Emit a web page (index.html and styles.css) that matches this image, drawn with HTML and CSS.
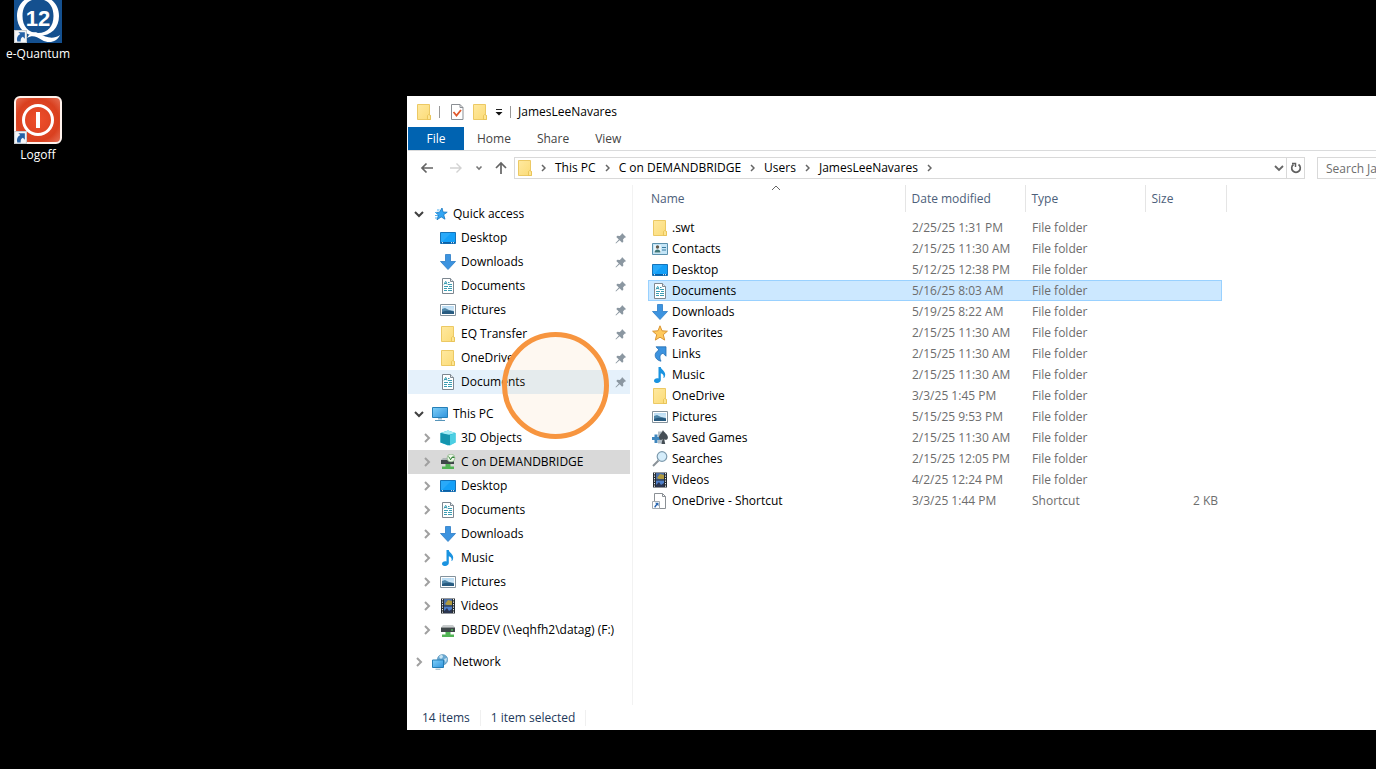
FILE: index.html
```html
<!DOCTYPE html>
<html lang="en">
<head>
<meta charset="utf-8">
<title>JamesLeeNavares</title>
<link rel="stylesheet" href="styles.css">
</head>
<body>
<svg class="sprite" aria-hidden="true">
  <defs>
    <linearGradient id="gFolder" x1="0" y1="0" x2="1" y2="1"><stop offset="0" stop-color="#ffe9a0"/><stop offset="1" stop-color="#fbdb76"/></linearGradient>
    <linearGradient id="gSky" x1="0" y1="0" x2="0" y2="1"><stop offset="0" stop-color="#b9dcf4"/><stop offset="1" stop-color="#e9f4fb"/></linearGradient>
    <linearGradient id="gScreen" x1="0" y1="0" x2="1" y2="1"><stop offset="0" stop-color="#7fd0f9"/><stop offset="1" stop-color="#2f93dc"/></linearGradient>
    <radialGradient id="gRed" cx=".5" cy=".5" r=".75"><stop offset="0" stop-color="#ee4f2c"/><stop offset=".6" stop-color="#d9401f"/><stop offset="1" stop-color="#e98068"/></radialGradient>
  </defs>
  <symbol id="folder" viewBox="0 0 16 16"><path d="M1.500.5h12v10.200l.9.600v4.200H1.500z" fill="url(#gFolder)" stroke="#ecc964"/><path d="M11.500 15.500v-4l1.200-1 1.800 1v4z" fill="#fde592" stroke="#e6bf50" stroke-width=".8"/></symbol>
  <symbol id="desktop" viewBox="0 0 16 16"><path d="M.5 2.500h15v11h-15z" fill="#14a0f8" stroke="#1574ba"/><path d="M1 12h14v1.500H1z" fill="#0b5fa5"/><path d="M2 12.700h1M11 12.700h1M13 12.700h1" stroke="#fff"/><path d="M1 3h10L2 12H1z" fill="#3db4fb" opacity=".5"/></symbol>
  <symbol id="downloads" viewBox="0 0 16 16"><path d="M5.500.5h5v7h5L8 15.500.5 7.500h5z" fill="#3c93df" stroke="#2b7cc6" stroke-width=".8"/></symbol>
  <symbol id="documents" viewBox="0 0 16 16"><path d="M2.500.5h8l3 3v12h-11z" fill="#fff" stroke="#7d8790"/><path d="M10.500.5v3h3" fill="#e4e8eb" stroke="#7d8790"/><path d="M4 6.500l1.500-3h.5L7 6.500M4.500 5.500h2M8 4.500h1.500M8 6.500h4M4 8.500h4M9 8.500h3M4 10.500h3M8 10.500h4M4 12.500h3M8 12.500h4" fill="none" stroke="#3c9db3"/></symbol>
  <symbol id="pictures" viewBox="0 0 16 16"><path d="M.5 2.500h15v11h-15z" fill="#fff" stroke="#84929c"/><path d="M2 4h12v8H2z" fill="url(#gSky)"/><path d="M2 7l3-1 4 2 5 1v3H2z" fill="#4f86a8"/><path d="M2 10c3-1 8-2 12 0v2H2z" fill="#285b80"/></symbol>
  <symbol id="music" viewBox="0 0 16 16"><path d="M6.500 0h2.300c.2 3 5.400 4 4.200 9-.3 1.500-1.200 2.200-1.600 2 .8-2.500-.3-4-2.600-4.800V13c0 3.500-6.800 4.200-6.800.8 0-2 2.300-3 4.500-2.300z" fill="#1a93e0"/></symbol>
  <symbol id="videos" viewBox="0 0 16 16"><path d="M1 .5h14v15H1z" fill="#252b31"/><path d="M4 1h8v6.500H4z" fill="#4c6fa5"/><path d="M4 8.500h8V15H4z" fill="#4f7fc9"/><path d="M5 6l3-4 4 1v4H7z" fill="#b09a3e"/><path d="M4 13l3-3 2 3 3-2v4H4z" fill="#2a3550"/><path d="M2.500 1v15M13.500 1v15" stroke="#e8ecef" stroke-dasharray="1.300 1.200"/></symbol>
  <symbol id="quick" viewBox="0 0 16 16"><path d="M10 2l1 4 4.200.2-3.500 2.500 1.300 4.500-3.800-2.300L5 13.800l1.500-4.800L3.500 6.500l4-.3z" fill="#32a5f3" stroke="#1676c0" stroke-width=".8"/><path d="M5 4h2.500M3 6.500h2M3 9.500h3M3 12h2" stroke="#4fb0f0"/></symbol>
  <symbol id="pc" viewBox="0 0 16 16"><path d="M.5 1.500h15v10H.5z" fill="url(#gScreen)" stroke="#257fb7"/><path d="M6 12h4v1.500H6z" fill="#9cbdd0"/><path d="M3 14.500h10" stroke="#5795ba"/></symbol>
  <symbol id="cube" viewBox="0 0 16 16"><path d="M.5 3L8 .5 15.500 3v9.500L8 15.500l-7.500-3z" fill="#19b3d0"/><path d="M.5 3L8 .5 15.500 3 8 5z" fill="#a5eef5"/><path d="M.5 3L10 5v10.500l-9.500-3z" fill="#1595ae"/><path d="M10 5l5.500-2v9.500l-5.500 3z" fill="#4ccfe3"/></symbol>
  <symbol id="drive" viewBox="0 0 16 16"><path d="M3 3h10l2 2.500H1z" fill="#c8cccd"/><path d="M1 5.500h14v4.500H1z" fill="#3f4749"/><path d="M11 8h2" stroke="#5aee67"/><path d="M5.500 10h5v2.500H14V15H2v-2.500h3.500z" fill="#52b455"/></symbol>
  <symbol id="drivex" viewBox="0 0 16 16"><path d="M1 6h13v4H1z" fill="#3f4749"/><path d="M3 4h8l1 2H1z" fill="#aeb5b6"/><circle cx="11" cy="4" r="3.900" fill="#edf7e9" stroke="#83ad7c" stroke-width=".7"/><path d="M8.500 2.500L11 6M13.500 2L10 6M11.500 3.500h3" stroke="#35853b" fill="none"/><path d="M5.500 10h5v2.500H14V15H2v-2.500h3.500z" fill="#52b455"/></symbol>
  <symbol id="network" viewBox="0 0 16 16"><circle cx="10.500" cy="5.700" r="5.200" fill="#6ba9d2" stroke="#4f8db7" stroke-width=".6"/><path d="M7 3c2-3 4-2 4 0L9 5zM12 5l3-1-1 5z" fill="#c7e4f3"/><path d="M.5 6h11v7.500H.5z" fill="url(#gScreen)" stroke="#237db5"/><path d="M3.500 15.200h5" stroke="#8dabbc"/></symbol>
  <symbol id="contacts" viewBox="0 0 16 16"><path d="M.5 2.500h15v11h-15z" fill="#c4e5f7" stroke="#5b91ad"/><path d="M2 4h7v8H2z" fill="#e7f4fa"/><circle cx="5.500" cy="6" r="1.700" fill="#615b50"/><path d="M2.500 11.500c0-4 6-4 6 0z" fill="#3f7779"/><path d="M10 6.500h4M10 9h4" stroke="#397b9e"/></symbol>
  <symbol id="favorites" viewBox="0 0 16 16"><path d="M8 .8l2 5 5.400.4-4.100 3.500 1.400 5.400L8 12.200l-4.700 2.900 1.400-5.400L.6 6.200 6 5.800z" fill="#ffc95c" stroke="#d99534"/></symbol>
  <symbol id="links" viewBox="0 0 16 16"><path d="M4 .8h10v9.400l-3-3c-3 1-4 3.500-2 8C3 14 .500 7.500 7 4z" fill="#3c93df" stroke="#256fb2" stroke-width=".8"/></symbol>
  <symbol id="games" viewBox="0 0 16 16"><path d="M6 1.500h4v12H6z" fill="#b4bfc7"/><path d="M2.500 4.500h3V7H8v3H5.500v3h-3v-3H0V7h2.500z" fill="#3f86bd"/><path d="M11 0c.8 2.500 4.900 4 4.900 7.500 0 2.500-2.900 3-3.700 1.500l1 5H9.500l1-5C8.800 11 7 9.300 7 7.300 7 4.500 10 3 11 0z" fill="#454e55"/></symbol>
  <symbol id="searches" viewBox="0 0 16 16"><path d="M6.500 9.500L1 15" stroke="#8a9298" stroke-width="2"/><circle cx="10" cy="5.500" r="4.800" fill="#d5edfb" stroke="#7e9bae" stroke-width="1.200"/></symbol>
  <symbol id="shortcut" viewBox="0 0 16 16"><path d="M2.500.5h8l3 3v12h-11z" fill="#fff" stroke="#8b9095"/><path d="M10.500.5v3h3" fill="none" stroke="#8b9095"/><path d="M.5 8.500h7v7h-7z" fill="#fff" stroke="#a3abb1"/><path d="M3 9.700h3.500v3.500L5.300 12 3 15l-.8-1.500L4.200 11z" fill="#2866b1"/></symbol>
  <symbol id="pin" viewBox="0 0 12 12"><path d="M7 1l4.200 4.200-1.300.2-1.800 1.800.2 2.500-1.200 1-2.500-2.500L1 11.500l-.5-.5 3.300-3.600-2.500-2.500 1-1.200 2.500.2L6.800 2z" fill="#8b97a1"/></symbol>
  <symbol id="open" viewBox="0 0 10 10"><path d="M1 3l4 4 4-4" fill="none" stroke="#404040" stroke-width="2"/></symbol>
  <symbol id="closed" viewBox="0 0 10 10"><path d="M3 1l4 4-4 4" fill="none" stroke="#a0a0a0" stroke-width="2"/></symbol>
  <symbol id="sep" viewBox="0 0 5 8"><path d="M1 1l3 3-3 3" fill="none" stroke="#666" stroke-width="1.500"/></symbol>
  <symbol id="badge" viewBox="0 0 12 12"><path d="M.5.500h11v11H.5z" fill="#f4f6f8" stroke="#c8ccd0"/><path d="M4 2h6v6L8.200 6.200C6.500 7 6 8.500 6.200 10.500H3C2.200 7.500 3.200 5 5.800 3.800z" fill="#2561a6"/></symbol>
</svg>

<main class="desktop">
  <button class="shortcut-tile">
    <svg class="tile-icon" viewBox="0 0 48 48"><path d="M0 0h48v48H0z" fill="#14508f"/><path d="M24 1C10 1 3 10 3 21s7 20 21 20 21-9 21-20S38 1 24 1zm0 3c10 0 15.500 7 15.500 17S34 38 24 38 8.500 31 8.500 21 14 4 24 4z" fill="#fff" fill-rule="evenodd"/><path d="M13 43c3-6 8-7 13-4s13 6 20 1c-3 7-11 9-18 5-6-4-10-5-15-2z" fill="#fff"/><text x="24" y="31" text-anchor="middle" class="logo-text">12</text><use href="#badge" x="0" y="35" width="13" height="13"/></svg>
    <span>e-Quantum</span>
  </button>
  <button class="shortcut-tile">
    <svg class="tile-icon" viewBox="0 0 48 48"><rect x="1" y="1" width="46" height="46" rx="5" fill="url(#gRed)" stroke="#fff2ec" stroke-width="2"/><circle cx="24" cy="24" r="14.500" fill="none" stroke="#fff" stroke-width="3"/><path d="M22 16h4v16h-4z" fill="#fff"/><use href="#badge" x="0" y="35" width="13" height="13"/></svg>
    <span>Logoff</span>
  </button>
</main>

<section class="window" aria-label="JamesLeeNavares">
  <header class="titlebar">
    <svg class="icon"><use href="#folder"/></svg>
    <i class="bar first"></i>
    <button class="plain" aria-label="Properties"><svg class="icon" viewBox="0 0 16 16"><path d="M2.500.5h8.500l3 3v12H2.500z" fill="#fff" stroke="#8b8f94"/><path d="M11 .5v3h3" fill="none" stroke="#8b8f94"/><path d="M4.500 8l3 3.500L12 6" fill="none" stroke="#e0582b" stroke-width="1.800"/></svg></button>
    <button class="plain" aria-label="New folder"><svg class="icon"><use href="#folder"/></svg></button>
    <button class="plain" aria-label="Customize toolbar"><svg class="caret" viewBox="0 0 8 8"><path d="M1 1.500h6" stroke="#222"/><path d="M.5 4h7L4 7.500z" fill="#111"/></svg></button>
    <i class="bar"></i>
    <h1>JamesLeeNavares</h1>
  </header>

  <nav class="ribbon">
    <button class="tab file">File</button>
    <button class="tab">Home</button>
    <button class="tab">Share</button>
    <button class="tab">View</button>
  </nav>

  <div class="toolbar">
    <div class="history">
      <button class="plain back" aria-label="Back"><svg class="arrow" viewBox="0 0 14 14"><path d="M13 7H2M6.500 2.500L2 7l4.500 4.500" fill="none" stroke="#646464" stroke-width="1.700"/></svg></button>
      <button class="plain" aria-label="Forward"><svg class="arrow" viewBox="0 0 14 14"><path d="M1 7h11M7.500 2.500L12 7l-4.500 4.500" fill="none" stroke="#d2d2d2" stroke-width="1.400"/></svg></button>
      <button class="plain" aria-label="Recent locations"><svg class="caret" viewBox="0 0 8 8"><path d="M1.500 2.500L4 5l2.500-2.500" fill="none" stroke="#777" stroke-width="1.600"/></svg></button>
      <button class="plain" aria-label="Up"><svg class="arrow" viewBox="0 0 14 14"><path d="M7 13V2M2 7l5-5 5 5" fill="none" stroke="#646464" stroke-width="1.700"/></svg></button>
    </div>
    <div class="address">
      <svg class="icon"><use href="#folder"/></svg>
      <svg class="sep"><use href="#sep"/></svg><a href="#">This PC</a>
      <svg class="sep"><use href="#sep"/></svg><a href="#">C on DEMANDBRIDGE</a>
      <svg class="sep"><use href="#sep"/></svg><a href="#">Users</a>
      <svg class="sep"><use href="#sep"/></svg><a href="#">JamesLeeNavares</a>
      <svg class="sep"><use href="#sep"/></svg>
      <button class="plain drop" aria-label="Previous locations"><svg class="chev" viewBox="0 0 10 10"><path d="M1 3l4 4 4-4" fill="none" stroke="#666" stroke-width="1.800"/></svg></button>
      <button class="plain refresh" aria-label="Refresh"><svg class="reload" viewBox="0 0 12 12"><path d="M8.500 2.500A4.300 4.300 0 1 1 3.500 2.500" fill="none" stroke="#606060" stroke-width="1.700"/><path d="M2 1.500h3.500V5" fill="none" stroke="#606060" stroke-width="1.500"/></svg></button>
    </div>
    <input class="search" type="text" aria-label="Search" placeholder="Search JamesLeeNavares">
  </div>

  <div class="content">
    <nav class="tree" aria-label="Folders">
      <ul>
        <li class="node root"><svg class="chev"><use href="#open"/></svg><svg class="icon"><use href="#quick"/></svg><a href="#">Quick access</a></li>
        <li class="node"><svg class="icon"><use href="#desktop"/></svg><a href="#">Desktop</a><svg class="pin"><use href="#pin"/></svg></li>
        <li class="node"><svg class="icon"><use href="#downloads"/></svg><a href="#">Downloads</a><svg class="pin"><use href="#pin"/></svg></li>
        <li class="node"><svg class="icon"><use href="#documents"/></svg><a href="#">Documents</a><svg class="pin"><use href="#pin"/></svg></li>
        <li class="node"><svg class="icon"><use href="#pictures"/></svg><a href="#">Pictures</a><svg class="pin"><use href="#pin"/></svg></li>
        <li class="node"><svg class="icon"><use href="#folder"/></svg><a href="#">EQ Transfer</a><svg class="pin"><use href="#pin"/></svg></li>
        <li class="node"><svg class="icon"><use href="#folder"/></svg><a href="#">OneDrive</a><svg class="pin"><use href="#pin"/></svg></li>
        <li class="node hover"><svg class="icon"><use href="#documents"/></svg><a href="#">Documents</a><svg class="pin"><use href="#pin"/></svg></li>
      </ul>
      <ul>
        <li class="node root"><svg class="chev"><use href="#open"/></svg><svg class="icon"><use href="#pc"/></svg><a href="#">This PC</a></li>
        <li class="node sub"><svg class="chev"><use href="#closed"/></svg><svg class="icon"><use href="#cube"/></svg><a href="#">3D Objects</a></li>
        <li class="node sub current"><svg class="chev"><use href="#closed"/></svg><svg class="icon"><use href="#drivex"/></svg><a href="#">C on DEMANDBRIDGE</a></li>
        <li class="node sub"><svg class="chev"><use href="#closed"/></svg><svg class="icon"><use href="#desktop"/></svg><a href="#">Desktop</a></li>
        <li class="node sub"><svg class="chev"><use href="#closed"/></svg><svg class="icon"><use href="#documents"/></svg><a href="#">Documents</a></li>
        <li class="node sub"><svg class="chev"><use href="#closed"/></svg><svg class="icon"><use href="#downloads"/></svg><a href="#">Downloads</a></li>
        <li class="node sub"><svg class="chev"><use href="#closed"/></svg><svg class="icon"><use href="#music"/></svg><a href="#">Music</a></li>
        <li class="node sub"><svg class="chev"><use href="#closed"/></svg><svg class="icon"><use href="#pictures"/></svg><a href="#">Pictures</a></li>
        <li class="node sub"><svg class="chev"><use href="#closed"/></svg><svg class="icon"><use href="#videos"/></svg><a href="#">Videos</a></li>
        <li class="node sub"><svg class="chev"><use href="#closed"/></svg><svg class="icon"><use href="#drive"/></svg><a href="#">DBDEV (\\eqhfh2\datag) (F:)</a></li>
      </ul>
      <ul>
        <li class="node root"><svg class="chev"><use href="#closed"/></svg><svg class="icon"><use href="#network"/></svg><a href="#">Network</a></li>
      </ul>
    </nav>

    <div class="files">
      <svg class="sort" viewBox="0 0 10 6"><path d="M1 5l4-4 4 4" fill="none" stroke="#666"/></svg>
      <table>
        <colgroup><col class="c-name"><col class="c-mid"><col class="c-mid"><col class="c-size"></colgroup>
        <thead><tr><th>Name</th><th>Date modified</th><th>Type</th><th>Size</th></tr></thead>
        <tbody>
          <tr><td><div><svg class="icon"><use href="#folder"/></svg>.swt</div></td><td><div>2/25/25 1:31 PM</div></td><td><div>File folder</div></td><td><div></div></td></tr>
          <tr><td><div><svg class="icon"><use href="#contacts"/></svg>Contacts</div></td><td><div>2/15/25 11:30 AM</div></td><td><div>File folder</div></td><td><div></div></td></tr>
          <tr><td><div><svg class="icon"><use href="#desktop"/></svg>Desktop</div></td><td><div>5/12/25 12:38 PM</div></td><td><div>File folder</div></td><td><div></div></td></tr>
          <tr class="selected"><td><div><svg class="icon"><use href="#documents"/></svg>Documents</div></td><td><div>5/16/25 8:03 AM</div></td><td><div>File folder</div></td><td><div></div></td></tr>
          <tr><td><div><svg class="icon"><use href="#downloads"/></svg>Downloads</div></td><td><div>5/19/25 8:22 AM</div></td><td><div>File folder</div></td><td><div></div></td></tr>
          <tr><td><div><svg class="icon"><use href="#favorites"/></svg>Favorites</div></td><td><div>2/15/25 11:30 AM</div></td><td><div>File folder</div></td><td><div></div></td></tr>
          <tr><td><div><svg class="icon"><use href="#links"/></svg>Links</div></td><td><div>2/15/25 11:30 AM</div></td><td><div>File folder</div></td><td><div></div></td></tr>
          <tr><td><div><svg class="icon"><use href="#music"/></svg>Music</div></td><td><div>2/15/25 11:30 AM</div></td><td><div>File folder</div></td><td><div></div></td></tr>
          <tr><td><div><svg class="icon"><use href="#folder"/></svg>OneDrive</div></td><td><div>3/3/25 1:45 PM</div></td><td><div>File folder</div></td><td><div></div></td></tr>
          <tr><td><div><svg class="icon"><use href="#pictures"/></svg>Pictures</div></td><td><div>5/15/25 9:53 PM</div></td><td><div>File folder</div></td><td><div></div></td></tr>
          <tr><td><div><svg class="icon"><use href="#games"/></svg>Saved Games</div></td><td><div>2/15/25 11:30 AM</div></td><td><div>File folder</div></td><td><div></div></td></tr>
          <tr><td><div><svg class="icon"><use href="#searches"/></svg>Searches</div></td><td><div>2/15/25 12:05 PM</div></td><td><div>File folder</div></td><td><div></div></td></tr>
          <tr><td><div><svg class="icon"><use href="#videos"/></svg>Videos</div></td><td><div>4/2/25 12:24 PM</div></td><td><div>File folder</div></td><td><div></div></td></tr>
          <tr><td><div><svg class="icon"><use href="#shortcut"/></svg>OneDrive - Shortcut</div></td><td><div>3/3/25 1:44 PM</div></td><td><div>Shortcut</div></td><td><div>2 KB</div></td></tr>
        </tbody>
      </table>
    </div>
  </div>

  <footer class="status"><span>14 items</span><span>1 item selected</span></footer>
  <div class="click-ring"></div>
</section>
</body>
</html>
```
FILE: styles.css
```css
* { box-sizing: border-box; }
html, body { height: 100%; }
body { margin: 0; background: #000; overflow: hidden; position: relative; font: 12px/16px "Open Sans", "Noto Sans", sans-serif; color: #000; }
button, input { font: inherit; color: inherit; }
a { color: inherit; text-decoration: none; white-space: nowrap; }
svg { display: block; flex: none; }
.sprite { position: absolute; width: 0; height: 0; }
.icon { width: 16px; height: 16px; }

.desktop { display: flex; flex-direction: column; align-items: flex-start; gap: 34px; margin-top: -5px; }
.shortcut-tile { width: 76px; padding: 0; border: 0; background: none; color: #fff; display: flex; flex-direction: column; align-items: center; gap: 3px; }
.tile-icon { width: 48px; height: 48px; }
.logo-text { font: bold 22px "Liberation Sans", sans-serif; fill: #fff; }

.window { position: absolute; inset: 96px 0 39px 407px; background: #fff; padding-left: 1px; display: flex; flex-direction: column; overflow: hidden; }
.plain { border: 0; background: none; padding: 0; display: flex; align-items: center; justify-content: center; }

.titlebar { height: 31px; flex: none; display: flex; align-items: center; padding-left: 8px; gap: 7px; }
.titlebar h1 { margin: 0; font-size: 12px; line-height: 16px; font-weight: 400; }
.bar { width: 1px; height: 12px; background: #999; }
.bar.first { margin-right: 2px; }
.caret { width: 8px; height: 8px; }

.ribbon { flex: none; height: 24px; display: flex; border-bottom: 1px solid #dadbdc; }
.tab { border: 0; background: none; padding: 0 13px; color: #444; }
.tab.file { width: 56px; background: #0063b1; color: #fff; }

.toolbar { flex: none; height: 34px; display: flex; align-items: center; }
.history { width: 106px; display: flex; align-items: center; justify-content: space-between; padding: 0 6px 0 12px; }
.back { margin-right: 4px; }
.arrow { width: 14px; height: 14px; }
.address { flex: 1; height: 22px; border: 1px solid #d9d9d9; display: flex; align-items: center; padding-left: 2px; }
.sep { width: 5px; height: 8px; margin: 0 9px; }
.address .icon { margin-right: -1px; }
.chev { width: 10px; height: 10px; }
.drop { margin-left: auto; width: 14px; height: 20px; }
.refresh { width: 18px; height: 20px; border-left: 1px solid #d9d9d9; }
.reload { width: 12px; height: 12px; }
.search { width: 59px; height: 22px; margin-left: 12px; border: 1px solid #d9d9d9; border-right: 0; border-radius: 0; padding: 0 0 0 8px; background: #fff; outline: 0; }
.search::placeholder { color: #6d6d6d; opacity: 1; }

.content { flex: 1; min-height: 0; display: flex; }
.tree { width: 225px; flex: none; padding: 17px 2px 0 0; border-right: 1px solid #f2f2f2; }
.tree ul { list-style: none; margin: 0 0 8px; padding: 0; }
.node { height: 24px; display: flex; align-items: center; gap: 5px; padding: 0 3px 0 32px; }
.node.root { padding-left: 6px; gap: 8px; }
.node.root a { margin-left: -3px; }
.node.sub { padding-left: 14px; gap: 8px; }
.node.sub a { margin-left: -3px; }
.node.hover { background: #e5f1fb; }
.node.current { background: #d9d9d9; }
.pin { width: 12px; height: 12px; margin-left: auto; }

.files { flex: 1; min-width: 0; padding-left: 15px; position: relative; }
.sort { position: absolute; left: 138px; top: 0; width: 10px; height: 6px; }
table { border-collapse: collapse; table-layout: fixed; width: 578px; }
.c-name { width: 257px; }
.c-mid { width: 120px; }
.c-size { width: 81px; }
th { height: 27px; padding: 0 6px; border-right: 1px solid #e5e5e5; text-align: left; font-weight: 400; color: #4c607a; }
th:first-child { padding-left: 3px; }
tbody::before { content: ""; display: block; height: 5px; }
td { padding: 0; color: #6d6d6d; }
td div { height: 21px; padding: 0 7px; display: flex; align-items: center; gap: 4px; white-space: nowrap; border: 0 solid #99d1ff; }
td:first-child { color: #000; }
td:first-child div { padding-left: 4px; }
td:last-child { padding-right: 4px; }
td:last-child div { justify-content: flex-end; padding-right: 4px; }
.selected div { background: #cce8ff; border-top-width: 1px; border-bottom-width: 1px; }
.selected td:first-child div { border-left-width: 1px; padding-left: 3px; }
.selected td:last-child div { border-right-width: 1px; }

.status { flex: none; height: 25px; display: flex; align-items: center; padding-left: 14px; color: #1e395b; }
.status span { padding-right: 10px; margin-right: 10px; border-right: 1px solid #f0f0f0; }

.click-ring { position: absolute; left: 95px; top: 236px; width: 107px; height: 107px; border: 5px solid #f7953f; border-radius: 50%; background: rgba(247, 149, 63, .07); pointer-events: none; }
```
